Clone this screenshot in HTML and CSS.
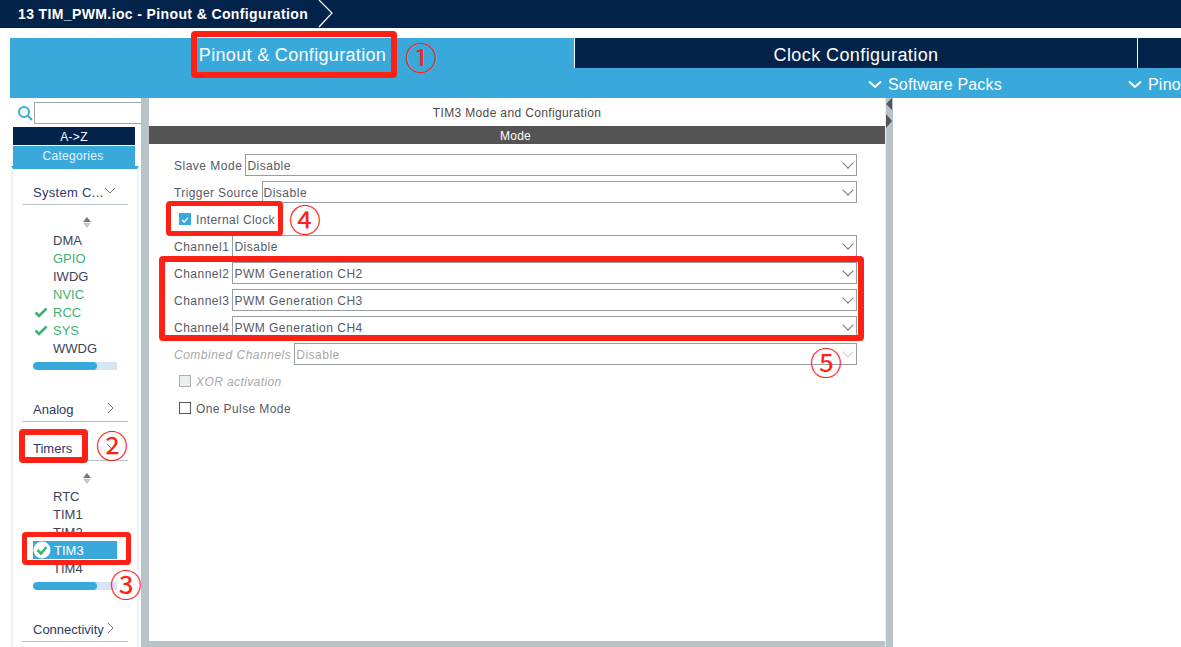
FILE: index.html
```html
<!DOCTYPE html>
<html lang="en">
<head>
<meta charset="utf-8">
<title>13 TIM_PWM.ioc - Pinout &amp; Configuration</title>
<link rel="stylesheet" href="styles.css">
</head>
<body>
<div class="crumb">
  <span class="crumb-text">13 TIM_PWM.ioc - Pinout &amp; Configuration</span>
  <svg class="crumb-arrow" width="16" height="28" viewBox="0 0 16 28"><path d="M1 0 L14 13 L1 27" fill="none" stroke="#fff" stroke-width="1.2"/></svg>
</div>
<div class="tabs">
  <div class="tab tab-active">Pinout &amp; Configuration</div>
  <div class="tab tab-clock">Clock Configuration</div>
  <div class="tab tab-rest"></div>
</div>
<div class="subbar">
  <div class="subitem sub-packs"><svg width="14" height="9" viewBox="0 0 14 9"><path d="M1 1.5 L7 7 L13 1.5" fill="none" stroke="#fff" stroke-width="2"/></svg>Software Packs</div>
  <div class="subitem sub-pinout"><svg width="14" height="9" viewBox="0 0 14 9"><path d="M1 1.5 L7 7 L13 1.5" fill="none" stroke="#fff" stroke-width="2"/></svg>Pino</div>
</div>
<div class="main">
  <aside class="side">
    <div class="search">
      <svg width="16" height="16" viewBox="0 0 16 16"><circle cx="7" cy="7" r="5" fill="none" stroke="#39a9dc" stroke-width="2"/><path d="M10.5 10.5 L15 15" stroke="#39a9dc" stroke-width="2"/></svg>
      <div class="search-box"></div>
    </div>
    <div class="sort sort-az">A-&gt;Z</div>
    <div class="sort sort-cat">Categories</div>
    <div class="tree">
      <div class="cat cat-first"><span>System C...</span><svg class="chev" width="12" height="8" viewBox="0 0 12 8"><path d="M1 1 L6 6 L11 1" fill="none" stroke="#777" stroke-width="1"/></svg></div>
      <div class="updown"><i class="up"></i><i class="down"></i></div>
      <ul class="list">
        <li>DMA</li>
        <li class="ok">GPIO</li>
        <li>IWDG</li>
        <li class="ok">NVIC</li>
        <li class="ok"><svg class="tick" width="14" height="11" viewBox="0 0 14 11"><path d="M1.5 5.5 L5 9 L12.5 1.5" fill="none" stroke="#3cb371" stroke-width="2.6"/></svg>RCC</li>
        <li class="ok"><svg class="tick" width="14" height="11" viewBox="0 0 14 11"><path d="M1.5 5.5 L5 9 L12.5 1.5" fill="none" stroke="#3cb371" stroke-width="2.6"/></svg>SYS</li>
        <li>WWDG</li>
      </ul>
      <div class="scroll"><div class="thumb"></div></div>
      <div class="cat cat-analog"><span>Analog</span><svg class="chev" width="8" height="12" viewBox="0 0 8 12"><path d="M1 1 L6 6 L1 11" fill="none" stroke="#777" stroke-width="1"/></svg></div>
      <div class="cat cat-timers"><span>Timers</span><svg class="chev" width="12" height="8" viewBox="0 0 12 8"><path d="M1 1 L6 6 L11 1" fill="none" stroke="#777" stroke-width="1"/></svg></div>
      <div class="updown"><i class="up"></i><i class="down"></i></div>
      <ul class="list">
        <li>RTC</li>
        <li>TIM1</li>
        <li>TIM2</li>
        <li class="sel"><svg class="badge" width="18" height="18" viewBox="0 0 18 18"><circle cx="9" cy="9" r="8.5" fill="#fff"/><path d="M4.5 9 L8 12.5 L13.5 6" fill="none" stroke="#3cb371" stroke-width="2.6"/></svg>TIM3</li>
        <li>TIM4</li>
      </ul>
      <div class="scroll"><div class="thumb"></div></div>
      <div class="cat cat-conn"><span>Connectivity</span><svg class="chev" width="8" height="12" viewBox="0 0 8 12"><path d="M1 1 L6 6 L1 11" fill="none" stroke="#777" stroke-width="1"/></svg></div>
    </div>
  </aside>
  <div class="split split-left"></div>
  <section class="panel">
    <div class="panel-title">TIM3 Mode and Configuration</div>
    <div class="panel-mode">Mode</div>
    <div class="form">
      <div class="row"><label>Slave Mode</label><div class="select">Disable</div></div>
      <div class="row"><label class="label-trigger">Trigger Source</label><div class="select">Disable</div></div>
      <div class="row row-check"><span class="check checked"><svg width="12" height="12" viewBox="0 0 12 12"><path d="M2.5 6 L5 8.5 L9.5 3.5" fill="none" stroke="#fff" stroke-width="1.6"/></svg></span><span>Internal Clock</span></div>
      <div class="row"><label>Channel1</label><div class="select">Disable</div></div>
      <div class="row"><label>Channel2</label><div class="select">PWM Generation CH2</div></div>
      <div class="row"><label>Channel3</label><div class="select">PWM Generation CH3</div></div>
      <div class="row"><label>Channel4</label><div class="select">PWM Generation CH4</div></div>
      <div class="row row-off"><label>Combined Channels</label><div class="select">Disable</div></div>
      <div class="row row-check row-off"><span class="check check-off"></span><span>XOR activation</span></div>
      <div class="row row-check"><span class="check"></span><span>One Pulse Mode</span></div>
    </div>
  </section>
  <div class="split split-right"><i class="tri tri-l"></i><i class="tri tri-r"></i></div>
  <div class="right"></div>
</div>

<div class="mark mark-1"></div><span class="num num-1">①</span>
<div class="mark mark-2"></div><span class="num num-2">②</span>
<div class="mark mark-3"></div><span class="num num-3">③</span>
<div class="mark mark-4"></div><span class="num num-4">④</span>
<div class="mark mark-5"></div><span class="num num-5">⑤</span>
</body>
</html>
```
FILE: styles.css
```css
* { box-sizing: border-box; }
html, body { margin: 0; padding: 0; }
body { width: 1181px; height: 647px; overflow: hidden; background: #fff; font-family: "Liberation Sans", Arial, sans-serif; position: relative; }

.crumb { height: 28px; background: #03234b; display: flex; align-items: center; padding-left: 18px; }
.crumb-text { color: #fff; font-size: 14px; font-weight: bold; letter-spacing: 0.38px; white-space: nowrap; }
.crumb-arrow { margin-left: 10px; }

.tabs { margin: 10px 0 0 10px; height: 30px; display: flex; }
.tab { color: #fff; font-size: 18px; letter-spacing: 0.33px; display: flex; align-items: center; justify-content: center; padding-top: 4px; }
.tab-active { width: 564px; background: #39a9dc; padding-left: 1px; }
.tab-clock { width: 564px; background: #03234b; border-left: 1px solid #fff; border-right: 1px solid #fff; letter-spacing: 0.42px; }
.tab-rest { flex: 1; background: #03234b; }

.subbar { margin-left: 10px; height: 30px; background: #39a9dc; position: relative; display: flex; }
.subitem { color: #fff; font-size: 16px; letter-spacing: 0.2px; display: flex; align-items: center; gap: 6px; white-space: nowrap; padding-top: 3px; }
.subitem svg { flex: none; }
.sub-packs { margin-left: 858px; width: 260px; }

.main { margin-left: 10px; height: 549px; display: flex; }
.side { width: 131px; background: #fff; display: flex; flex-direction: column; align-items: stretch; }
.search { height: 27px; display: flex; align-items: center; padding: 2px 0 0 7px; gap: 1px; }
.search-box { width: 107px; height: 22px; border: 1px solid #a0a6ab; border-right: 0; }
.sort { margin-left: 3px; width: 122px; font-size: 12px; text-align: center; color: #fff; letter-spacing: 0.3px; }
.sort-az { height: 18px; line-height: 20px; background: #03234b; margin-top: 2px; }
.sort-cat { height: 21px; line-height: 20px; background: #39a9dc; margin-top: 1px; color: #e6f4fb; padding-right: 2px; }
.tree { margin: -1px 0 0 1px; width: 128px; flex: 1; border-top: 3px solid #39a9dc; border-left: 2px solid #f1f2f4; border-right: 2px solid #f1f2f4; padding: 0 9px; }
.cat { display: flex; align-items: center; height: 27px; border-bottom: 1px solid #b9c4ca; font-size: 13px; color: #2b3a67; padding: 2px 0 0 11px; width: 106px; }
.cat span { white-space: nowrap; }
.chev { flex: none; margin-left: auto; margin-right: 13px; margin-bottom: 2px; }
.cat-first { margin-top: 11px; height: 25px; padding-top: 1px; }
.cat-first span { letter-spacing: 0.3px; }
.cat-first .chev, .cat-timers .chev { margin-right: 10px; margin-left: 1px; }
.cat-first .chev { margin-bottom: 3px; }
.cat-timers .chev { margin-left: auto; }
.cat-analog { margin-top: 25px; }
.cat-timers { margin-top: 12px; }
.cat-conn { margin-top: 25px; }
.updown { height: 26px; display: flex; flex-direction: column; align-items: center; justify-content: flex-end; gap: 1px; padding: 0 0 3px 24px; width: 106px; }
.updown .up { width: 0; height: 0; border: 4px solid transparent; border-top: 0; border-bottom: 5px solid #777; }
.updown .down { width: 0; height: 0; border: 4px solid transparent; border-bottom: 0; border-top: 5px solid #c9c9c9; }
.list { list-style: none; margin: 0; padding: 0; width: 106px; }
.list li { height: 18px; line-height: 20px; font-size: 13px; color: #3d4256; padding-left: 31px; position: relative; width: 95px; }
.list li.ok { color: #3cb371; }
.tick { position: absolute; left: 12px; top: 4px; }
.list li.sel { background: #39a9dc; color: #fff; margin-left: 11px; width: 84px; padding-left: 21px; }
.badge { position: absolute; left: 0; top: 0; }
.scroll { margin: 5px 0 0 11px; width: 84px; height: 8px; background: #d4e6f5; border-radius: 4px 0 0 4px; overflow: hidden; }
.thumb { width: 64px; height: 8px; background: #39a9dc; border-radius: 4px; }

.split-left { width: 8px; background: #b9c4ca; }
.panel { width: 737px; background: #fff; display: flex; flex-direction: column; border-bottom: 6px solid #b9c4ca; }
.panel-title { height: 28px; font-size: 12px; color: #4a4a4a; display: flex; align-items: center; justify-content: center; padding: 2px 1px 0 0; letter-spacing: 0.36px; }
.panel-mode { height: 18px; line-height: 20px; background: #535453; color: #fff; text-align: center; font-size: 12px; letter-spacing: 0.2px; padding-right: 4px; }
.form { padding: 10px 29px 0 25px; display: flex; flex-direction: column; gap: 5px; }
.row { display: flex; align-items: center; height: 22px; font-size: 12px; color: #555a66; letter-spacing: 0.5px; }
.row label { white-space: nowrap; margin-right: 3px; padding-top: 1px; }
.row .label-trigger { letter-spacing: 0.4px; }
.select { flex: 1; height: 22px; line-height: 22px; border: 1px solid #9a9da0; padding-left: 1px; position: relative; color: #555a66; white-space: nowrap; }
.select::after { content: ""; position: absolute; right: 4px; top: 4px; width: 7px; height: 7px; border-right: 1px solid #777; border-bottom: 1px solid #777; transform: rotate(45deg); }
.row-off, .row-off .select { color: #a6a8ab; }
.row-off label, .row-check.row-off span:last-child { font-style: italic; }
.row-off .select::after { border-color: #cfcfcf; }
.row-check { padding-left: 5px; gap: 5px; letter-spacing: 0.4px; }
.row-check span:last-child { padding-top: 1px; }
.check { width: 12px; height: 12px; border: 1px solid #555; display: flex; background: #fff; flex: none; padding: 0; }
.row-check .check { padding-top: 0; }
.check.checked { background: #39a9dc; border-color: #39a9dc; }
.check.check-off { background: #eceff1; border-color: #a9aeb3; }

.split-right { width: 8px; background: #b9c4ca; position: relative; border-left: 1px solid #e8ecee; margin-left: -1px; }
.tri { position: absolute; width: 0; height: 0; border-style: solid; }
.tri-l { left: 0; top: 0; border-width: 6px 6px 6px 0; border-color: transparent #555 transparent transparent; }
.tri-r { left: 0; top: 16px; border-width: 7px 0 7px 6px; border-color: transparent transparent transparent #555; }
.right { flex: 1; background: #fff; }

.mark { position: absolute; border: 5px solid #ff2016; border-radius: 4px; background: transparent; }
.mark-1 { left: 191px; top: 31px; width: 206px; height: 47px; border-width: 6px; }
.mark-2 { left: 19px; top: 429px; width: 69px; height: 34px; border-width: 6px; }
.mark-3 { left: 22px; top: 532px; width: 109px; height: 33px; }
.mark-4 { left: 166px; top: 201px; width: 117px; height: 35px; }
.mark-5 { left: 159px; top: 256px; width: 705px; height: 85px; border-width: 6px; }
.num { position: absolute; color: #ff2016; font-family: "Noto Sans CJK SC", "DejaVu Sans", sans-serif; font-size: 32px; line-height: 32px; width: 32px; text-align: center; -webkit-text-stroke: 0.1px #ff2016; }
.num-1 { left: 405px; top: 40px; }
.num-2 { left: 96px; top: 428px; }
.num-3 { left: 110px; top: 567px; }
.num-4 { left: 289px; top: 202px; }
.num-5 { left: 810px; top: 345px; }
```
